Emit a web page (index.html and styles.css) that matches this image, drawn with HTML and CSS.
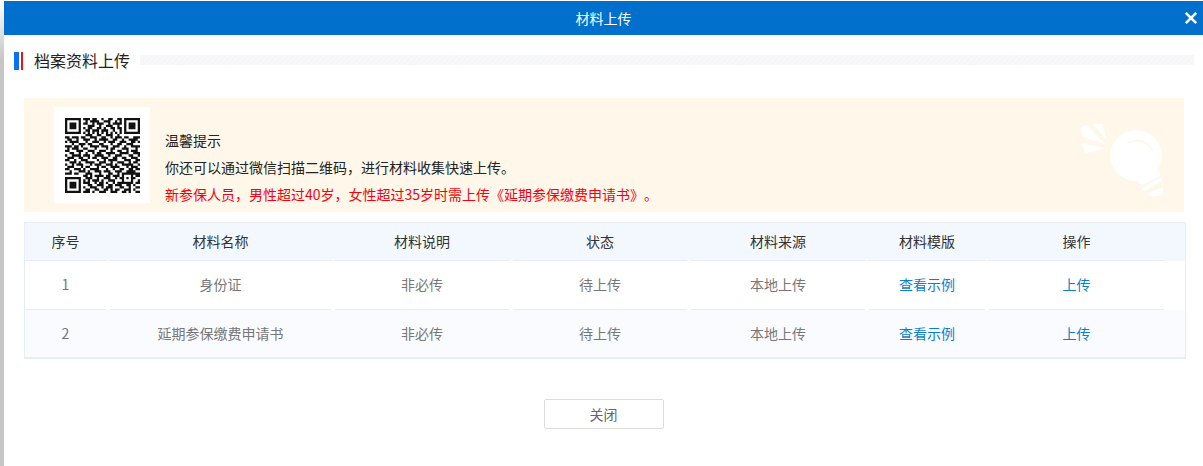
FILE: index.html
```html
<!DOCTYPE html>
<html lang="zh-CN">

<head>
  <meta charset="utf-8">
  <title>材料上传</title>
  <link rel="stylesheet" href="styles.css">
</head>

<body>
  <div class="dialog">
    <div class="dialog-bar">
      <span class="dialog-title">材料上传</span>
      <svg class="dialog-close" viewBox="0 0 14 14" width="14" height="14">
        <path d="M1.800 1.800l10.400 10.400M12.200 1.800L1.800 12.200" fill="none" stroke="#fff" stroke-width="2.600" />
      </svg>
    </div>

    <div class="section-head">
      <i class="mark mark-blue"></i>
      <i class="mark mark-red"></i>
      <span class="section-title">档案资料上传</span>
      <div class="section-line"></div>
    </div>

    <div class="notice">
      <div class="qr-box">
        <svg class="qr" viewBox="0 0 33 33" width="75" height="75">
          <path fill="#111" fill-rule="evenodd" d="M0 0h7v7H0zM1 1v5h5V1zM2 2h3v3H2zM26 0h7v7h-7zM27 1v5h5V1zM28 2h3v3h-3zM0 26h7v7H0zM1 27v5h5v-5zM2 28h3v3H2z" />
          <path fill="none" stroke="#111" stroke-width="1" d="
            M8 .5h3M12 .5h2M16 .5h1M19 .5h2M23 .5h2
            M9 1.500h1M11 1.500h4M17 1.500h3M22 1.500h1M24 1.500h1
            M8 2.500h2M12 2.500h1M14 2.500h3M19 2.500h1M21 2.500h4
            M10 3.500h3M15 3.500h1M18 3.500h3M23 3.500h1
            M8 4.500h1M10 4.500h2M14 4.500h2M17 4.500h1M20 4.500h2M23 4.500h2
            M9 5.500h2M12 5.500h3M16 5.500h3M21 5.500h1M24 5.500h1
            M8 6.500h1M10 6.500h1M12 6.500h1M14 6.500h1M16 6.500h1M18 6.500h1M20 6.500h1M22 6.500h1M24 6.500h1
            M9 7.500h3M14 7.500h2M18 7.500h3M23 7.500h1
            M0 8.500h2M3 8.500h3M7 8.500h2M11 8.500h3M16 8.500h2M20 8.500h1M22 8.500h3M26 8.500h2M30 8.500h3
            M1 9.500h2M5 9.500h1M8 9.500h3M13 9.500h1M15 9.500h4M21 9.500h2M25 9.500h1M28 9.500h4
            M0 10.500h1M2 10.500h4M9 10.500h1M12 10.500h3M17 10.500h1M19 10.500h3M24 10.500h3M29 10.500h2M32 10.500h1
            M3 11.500h1M6 11.500h3M10 11.500h2M15 11.500h2M20 11.500h1M23 11.500h2M27 11.500h3
            M0 12.500h3M4 12.500h2M7 12.500h1M11 12.500h4M16 12.500h3M21 12.500h3M26 12.500h1M29 12.500h4
            M1 13.500h1M3 13.500h3M8 13.500h2M13 13.500h1M18 13.500h1M20 13.500h2M25 13.500h3M31 13.500h1
            M0 14.500h2M5 14.500h3M10 14.500h3M15 14.500h3M20 14.500h1M23 14.500h2M27 14.500h1M29 14.500h3
            M2 15.500h2M6 15.500h1M9 15.500h1M12 15.500h1M14 15.500h2M18 15.500h4M24 15.500h4M30 15.500h3
            M0 16.500h1M3 16.500h4M8 16.500h3M13 16.500h4M19 16.500h1M22 16.500h3M28 16.500h2M32 16.500h1
            M1 17.500h3M6 17.500h2M10 17.500h1M12 17.500h2M16 17.500h3M21 17.500h2M25 17.500h2M29 17.500h3
            M0 18.500h2M4 18.500h1M7 18.500h3M14 18.500h1M17 18.500h1M19 18.500h4M26 18.500h3M31 18.500h2
            M2 19.500h3M6 19.500h1M9 19.500h4M15 19.500h3M20 19.500h1M23 19.500h3M28 19.500h1M30 19.500h2
            M0 20.500h1M3 20.500h1M5 20.500h3M11 20.500h1M13 20.500h3M18 20.500h3M22 20.500h1M25 20.500h5M32 20.500h1
            M1 21.500h3M7 21.500h1M9 21.500h2M14 21.500h1M16 21.500h2M20 21.500h4M27 21.500h1M29 21.500h3
            M0 22.500h2M4 22.500h3M8 22.500h1M11 22.500h4M18 22.500h1M21 22.500h1M24 22.500h2M28 22.500h2M31 22.500h2
            M2 23.500h1M6 23.500h3M10 23.500h1M13 23.500h3M17 23.500h3M22 23.500h3M27 23.500h4
            M0 24.500h3M4 24.500h2M9 24.500h3M15 24.500h1M19 24.500h2M23 24.500h1M25 24.500h8
            M8 25.500h2M11 25.500h1M13 25.500h4M18 25.500h2M21 25.500h3M25 25.500h1M29 25.500h1M31 25.500h2
            M9 26.500h3M14 26.500h1M17 26.500h3M22 26.500h1M24 26.500h2M27 26.500h1M29 26.500h2
            M8 27.500h1M10 27.500h1M12 27.500h3M16 27.500h1M19 27.500h3M25 27.500h1M29 27.500h1M32 27.500h1
            M8 28.500h3M13 28.500h1M15 28.500h2M18 28.500h1M21 28.500h1M23 28.500h7M31 28.500h2
            M10 29.500h2M14 29.500h3M19 29.500h2M22 29.500h3M27 29.500h2M30 29.500h1
            M8 30.500h1M11 30.500h3M16 30.500h1M18 30.500h3M24 30.500h2M28 30.500h1M31 30.500h2
            M9 31.500h2M13 31.500h2M17 31.500h2M20 31.500h1M22 31.500h2M26 31.500h3M30 31.500h1
            M8 32.500h3M12 32.500h1M15 32.500h3M20 32.500h3M25 32.500h2M28 32.500h1M31 32.500h2" />
        </svg>
      </div>
      <div class="notice-text">
        <p>温馨提示</p>
        <p>你还可以通过微信扫描二维码，进行材料收集快速上传。</p>
        <p class="warn">新参保人员，男性超过40岁，女性超过35岁时需上传《延期参保缴费申请书》。</p>
      </div>
      <svg class="bulb" viewBox="0 0 100 85" width="100" height="85">
        <path fill="#fff" d="M11 11l6-2 18 19-22-7zM23 8h10l3 15zM11 27l25 5-20 5z" />
        <circle cx="66" cy="39.500" r="25.500" fill="#fff" />
        <path fill="#fff" d="M64 62l24-10 2 8-18 9z" />
        <path fill="none" stroke="#fff8ea" stroke-width="2" stroke-linecap="round" d="M58 27c6-4 16-4 24 6" />
        <path fill="none" stroke="#fff" stroke-width="4" stroke-linecap="round" d="M74 73l16-9" />
        <path fill="#fff" d="M77 78l16-7c1 5-1 8-5 9s-8 0-11-2z" />
      </svg>
    </div>

    <div class="grid-wrap">
      <div class="grid-row grid-head">
        <div>序号</div>
        <div>材料名称</div>
        <div>材料说明</div>
        <div>状态</div>
        <div>材料来源</div>
        <div>材料模版</div>
        <div>操作</div>
      </div>
      <div class="grid-row">
        <div>1</div>
        <div>身份证</div>
        <div>非必传</div>
        <div>待上传</div>
        <div>本地上传</div>
        <div><a href="#">查看示例</a></div>
        <div><a href="#">上传</a></div>
      </div>
      <div class="grid-row grid-alt">
        <div>2</div>
        <div>延期参保缴费申请书</div>
        <div>非必传</div>
        <div>待上传</div>
        <div>本地上传</div>
        <div><a href="#">查看示例</a></div>
        <div><a href="#">上传</a></div>
      </div>
    </div>

    <div class="foot">
      <button type="button">关闭</button>
    </div>
  </div>
</body>

</html>
```

FILE: styles.css
```css
html, body {
  margin: 0;
  height: 466px;
  overflow: hidden;
}

body {
  background: linear-gradient(#fff, #c6c6c6 60px);
  font-family: "Noto Sans CJK SC", "Liberation Sans", sans-serif;
  font-size: 14px;
  color: #333;
  text-spacing-trim: space-all;
}

.dialog {
  margin: 1px 0 0 4px;
  height: 465px;
  background: #fff;
}

.dialog-bar {
  position: relative;
  height: 34px;
  line-height: 34px;
  background: #0070cc;
  color: #fff;
  text-align: center;
}

/* sits over the bar, title stays centred */
.dialog-close {
  position: absolute;
  top: 10px;
  right: 5px;
}

.section-head {
  display: flex;
  height: 18px;
  padding: 17px 9px 0 10px;
}

.mark {
  display: block;
  height: 18px;
}

.mark-blue {
  width: 5px;
  background: #0a6ffb;
}

.mark-red {
  width: 2px;
  margin-left: 2px;
  background: #f0101c;
}

.section-title {
  margin: -1px 0 0 11px;
  font-size: 16px;
  line-height: 18px;
  color: #222;
}

.section-line {
  flex: 1;
  height: 10px;
  margin: 3px 0 0 10px;
  background: repeating-linear-gradient(135deg, #f5f6f7, #f5f6f7 2px, #f8f8fa 2px, #f8f8fa 4px);
}

.notice {
  display: flex;
  height: 96px;
  margin: 28px 19px 0 20px;
  padding: 9px 14px 9px 30px;
  background: #fff8ea;
}

.qr-box {
  display: flex;
  align-items: center;
  justify-content: center;
  width: 96px;
  height: 96px;
  background: #fff;
}

.qr {
  filter: blur(.3px);
}

.notice-text {
  flex: 1;
  margin-left: 15px;
  padding-top: 20px;
  color: #222;
}

.notice-text p {
  margin: 0;
  line-height: 27px;
}

.notice-text .warn {
  color: #f5000f;
}

.bulb {
  align-self: flex-end;
  margin-bottom: 2px;
}

.grid-wrap {
  margin: 10px 17px 0 20px;
  border: 1px solid #e6edf7;
  border-bottom-width: 2px;
}

.grid-row {
  display: grid;
  grid-template-columns: 81px 221px 174px 174px 174px 116px 175px;
  column-gap: 4px;
  text-align: center;
  color: #777;
}

.grid-row > div {
  height: 49px;
  line-height: 47px;
  box-sizing: border-box;
  border-bottom: 1px solid #e6edf7;
}

.grid-row:last-child > div {
  height: 47px;
  line-height: 46px;
  border-bottom: 0;
}

.grid-head {
  background: #f3f8ff;
  color: #333;
}

.grid-head > div {
  height: 38px;
  line-height: 37px;
}

.grid-alt {
  background: #fafbff;
}

.grid-row a {
  color: #0b7fc9;
  text-decoration: none;
}

.foot {
  margin-top: 40px;
  text-align: center;
}

.foot button {
  width: 120px;
  height: 30px;
  padding: 0;
  border: 1px solid #ddd;
  border-radius: 2px;
  background: #fff;
  color: #666;
  font: inherit;
  cursor: pointer;
}
```
